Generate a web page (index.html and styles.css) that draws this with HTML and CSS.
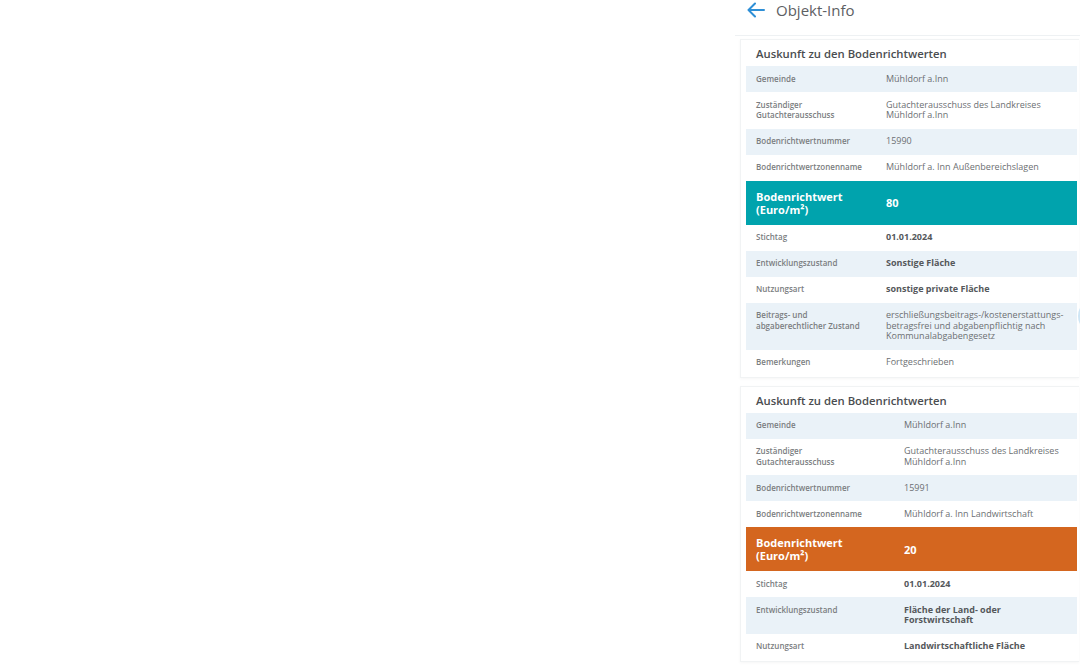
FILE: index.html
```html
<!DOCTYPE html>
<html lang="de">
<head>
  <meta charset="UTF-8">
  <title>Objekt-Info</title>
  <link rel="stylesheet" href="styles.css">
</head>
<body>
  <div class="page">
    <div class="map"></div>

    <aside class="panel">
      <div class="panel-head">
        <svg class="back" width="20" height="20" viewBox="0 0 20 20">
          <path d="M18 10H3M9 3.5L2.5 10 9 16.5" fill="none" stroke="#2e8fd6" stroke-width="2" stroke-linecap="round" stroke-linejoin="round"/>
        </svg>
        <span class="panel-title">Objekt-Info</span>
      </div>

      <div class="card card-1">
        <h2>Auskunft zu den Bodenrichtwerten</h2>
        <div class="info">
          <div class="row blue"><div class="label">Gemeinde</div><div class="value">Mühldorf a.Inn</div></div>
          <div class="row"><div class="label">Zuständiger<br>Gutachterausschuss</div><div class="value">Gutachterausschuss des Landkreises<br>Mühldorf a.Inn</div></div>
          <div class="row blue"><div class="label">Bodenrichtwertnummer</div><div class="value">15990</div></div>
          <div class="row"><div class="label">Bodenrichtwertzonenname</div><div class="value">Mühldorf a. Inn Außenbereichslagen</div></div>
          <div class="row price teal"><div class="label">Bodenrichtwert<br>(Euro/m²)</div><div class="value">80</div></div>
          <div class="row"><div class="label">Stichtag</div><div class="value strong">01.01.2024</div></div>
          <div class="row blue"><div class="label">Entwicklungszustand</div><div class="value strong">Sonstige Fläche</div></div>
          <div class="row"><div class="label">Nutzungsart</div><div class="value strong">sonstige private Fläche</div></div>
          <div class="row blue"><div class="label">Beitrags- und<br>abgaberechtlicher Zustand</div><div class="value">erschließungsbeitrags-/kostenerstattungs-<br>betragsfrei und abgabenpflichtig nach<br>Kommunalabgabengesetz</div></div>
          <div class="row"><div class="label">Bemerkungen</div><div class="value">Fortgeschrieben</div></div>
        </div>
        <span class="scroll-dot"></span>
      </div>

      <div class="card card-2">
        <h2>Auskunft zu den Bodenrichtwerten</h2>
        <div class="info">
          <div class="row blue"><div class="label">Gemeinde</div><div class="value">Mühldorf a.Inn</div></div>
          <div class="row"><div class="label">Zuständiger<br>Gutachterausschuss</div><div class="value">Gutachterausschuss des Landkreises<br>Mühldorf a.Inn</div></div>
          <div class="row blue"><div class="label">Bodenrichtwertnummer</div><div class="value">15991</div></div>
          <div class="row"><div class="label">Bodenrichtwertzonenname</div><div class="value">Mühldorf a. Inn Landwirtschaft</div></div>
          <div class="row price orange"><div class="label">Bodenrichtwert<br>(Euro/m²)</div><div class="value">20</div></div>
          <div class="row"><div class="label">Stichtag</div><div class="value strong">01.01.2024</div></div>
          <div class="row blue"><div class="label">Entwicklungszustand</div><div class="value strong">Fläche der Land- oder<br>Forstwirtschaft</div></div>
          <div class="row"><div class="label">Nutzungsart</div><div class="value strong">Landwirtschaftliche Fläche</div></div>
        </div>
      </div>
    </aside>
  </div>
</body>
</html>
```

FILE: styles.css
```css
html, body {
  margin: 0;
  padding: 0;
  background: #fff;
  font-family: "Open Sans", Arial, sans-serif;
}
.page {
  display: flex;
  width: 1080px;
  height: 665px;
  overflow: hidden;
}
.map {
  flex: 1;
}
.panel {
  width: 345px;
  display: flex;
  flex-direction: column;
}
.panel > * {
  flex-shrink: 0;
}
.panel-head {
  display: flex;
  align-items: flex-start;
  height: 36px;
  padding: 0 0 0 11px;
  border-bottom: 1px solid #eef1f3;
  box-sizing: border-box;
  margin-bottom: 3px;
}
.back {
  margin-right: 10px;
}
.panel-title {
  font-size: 15px;
  line-height: 20px;
  color: #5d6063;
}
.card {
  position: relative;
  margin-left: 5px;
  margin-right: 1px;
  padding: 0 2px 1px 5px;
  border: 1px solid #f1f3f4;
  border-right: none;
  box-shadow: 0 1px 3px rgba(0,0,0,0.04);
  margin-bottom: 8px;
}
.card h2 {
  margin: 0;
  padding: 5px 0 0 10px;
  height: 21px;
  font-size: 11.3px;
  font-weight: 600;
  color: #4a4d50;
  line-height: 18px;
}
.info {
  display: flex;
  flex-direction: column;
}
.row {
  display: grid;
  grid-template-columns: 130px 1fr;
  padding: 7.75px 0 7.75px 10px;
  font-size: 9px;
  line-height: 10.5px;
  color: #707376;
}
.card-2 .row {
  grid-template-columns: 148px 1fr;
}
.row.blue {
  background: #eaf2f8;
}
.label {
  font-size: 8px;
  font-weight: 600;
  color: #7a7d80;
}
.value {
  color: #6c6f72;
}
.value.strong {
  font-weight: 700;
  color: #55585b;
}
.row.price {
  padding: 9px 0 9px 10px;
  color: #fff;
  font-size: 11px;
  font-weight: 700;
  line-height: 13px;
}
.row.price .label,
.row.price .value {
  font-size: 11px;
  font-weight: 700;
  color: #fff;
}
.row.price .value {
  align-self: center;
}
.teal {
  background: #00a3ad;
}
.orange {
  background: #d4661f;
}
.scroll-dot {
  position: absolute;
  right: -9px;
  top: 266px;
  width: 10px;
  height: 20px;
  border-radius: 50%;
  background: #cfe6f5;
}
```
